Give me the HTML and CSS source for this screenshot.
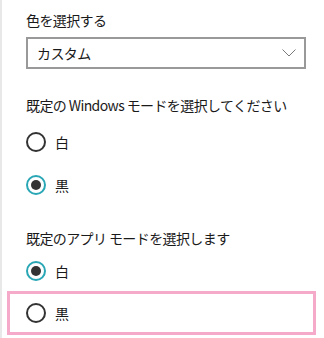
FILE: index.html
```html
<!DOCTYPE html>
<html lang="ja">
<head>
<meta charset="utf-8">
<link rel="stylesheet" href="styles.css">
</head>
<body>
<div class="panel">
  <div class="label first">色を選択する</div>
  <div class="select">
    <span class="select-text">カスタム</span>
    <svg class="chevron" width="14" height="8" viewBox="0 0 14 8"><path d="M0.5 0.5 L7 7 L13.5 0.5" fill="none" stroke="#7a7a7a" stroke-width="1"/></svg>
  </div>
  <div class="label section">既定の Windows モードを選択してください</div>
  <div class="row after"><span class="radio"></span><span class="opt">白</span></div>
  <div class="row"><span class="radio checked"></span><span class="opt">黒</span></div>
  <div class="label section2">既定のアプリ モードを選択します</div>
  <div class="row after2"><span class="radio checked"></span><span class="opt">白</span></div>
  <div class="row focus"><span class="radio"></span><span class="opt">黒</span></div>
</div>
</body>
</html>
```
FILE: styles.css
```css
html, body {
  margin: 0;
  padding: 0;
  background: #ffffff;
}
body {
  font-family: "Noto Sans CJK JP", "Noto Sans", sans-serif;
  color: #1a1a1a;
  font-size: 14px;
}
.panel {
  border-left: 2px solid #e8e8e8;
  height: 338px;
  box-sizing: border-box;
  padding-left: 24px;
  overflow: hidden;
}
.label {
  line-height: 20px;
  height: 20px;
  letter-spacing: -0.6px;
}
.first { padding-top: 10px; }
.select {
  margin-top: 7px;
  width: 280px;
  height: 32px;
  box-sizing: border-box;
  border: 2px solid #999999;
  display: flex;
  align-items: center;
  justify-content: space-between;
  padding: 0 8px 0 9px;
}
.select-text { letter-spacing: -0.6px; }
.chevron { display: block; }
.section { margin-top: 26px; }
.section2 { margin-top: 22px; }
.row {
  height: 43px;
  display: flex;
  align-items: center;
  gap: 9px;
}
.after { margin-top: 5px; }
.after2 { margin-top: 1px; }
.radio {
  width: 20px;
  height: 20px;
  box-sizing: border-box;
  border: 2px solid #333333;
  border-radius: 50%;
  display: flex;
  align-items: center;
  justify-content: center;
}
.radio.checked { border-color: #2aa7b5; }
.radio.checked::after {
  content: "";
  width: 10px;
  height: 10px;
  border-radius: 50%;
  background: #333333;
}
.focus {
  margin-left: -19px;
  padding-left: 16px;
  width: 309px;
  height: 44px;
  box-sizing: border-box;
  border: 3px solid #f4aac8;
  margin-top: -1px;
}
```
